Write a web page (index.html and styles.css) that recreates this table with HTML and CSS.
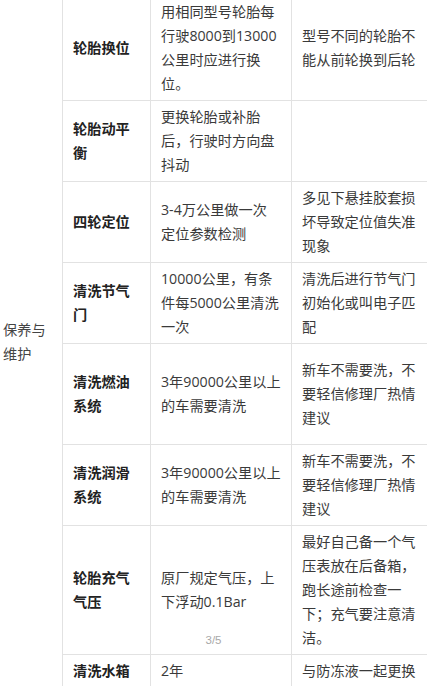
FILE: index.html
```html
<!DOCTYPE html>
<html lang="zh-CN">
<head>
<meta charset="utf-8">
<title>保养与维护</title>
<link rel="stylesheet" href="styles.css">
</head>
<body>
<div class="viewer">
  <table class="spec">
    <colgroup>
      <col class="c1"><col class="c2"><col class="c3"><col class="c4">
    </colgroup>
    <tbody>
      <tr>
        <td class="cat" rowspan="8">保养与维护</td>
        <td class="item">轮胎换位</td>
        <td>用相同型号轮胎每行驶8000到13000公里时应进行换位。</td>
        <td>型号不同的轮胎不能从前轮换到后轮</td>
      </tr>
      <tr>
        <td class="item">轮胎动平衡</td>
        <td>更换轮胎或补胎后，行驶时方向盘抖动</td>
        <td></td>
      </tr>
      <tr>
        <td class="item">四轮定位</td>
        <td>3-4万公里做一次定位参数检测</td>
        <td>多见下悬挂胶套损坏导致定位值失准现象</td>
      </tr>
      <tr>
        <td class="item">清洗节气门</td>
        <td>10000公里，有条件每5000公里清洗一次</td>
        <td>清洗后进行节气门初始化或叫电子匹配</td>
      </tr>
      <tr class="tall">
        <td class="item">清洗燃油系统</td>
        <td>3年90000公里以上的车需要清洗</td>
        <td>新车不需要洗，不要轻信修理厂热情建议</td>
      </tr>
      <tr>
        <td class="item">清洗润滑系统</td>
        <td>3年90000公里以上的车需要清洗</td>
        <td>新车不需要洗，不要轻信修理厂热情建议</td>
      </tr>
      <tr>
        <td class="item">轮胎充气气压</td>
        <td>原厂规定气压，上下浮动0.1Bar</td>
        <td>最好自己备一个气压表放在后备箱，跑长途前检查一下；充气要注意清洁。</td>
      </tr>
      <tr>
        <td class="item">清洗水箱</td>
        <td>2年</td>
        <td>与防冻液一起更换</td>
      </tr>
    </tbody>
  </table>
  <div class="pager">3/5</div>
</div>
</body>
</html>
```

FILE: styles.css
```css
html, body {
  margin: 0;
  padding: 0;
  background: #ffffff;
  overflow: hidden;
}

.viewer {
  position: relative;
  width: 427px;
  height: 686px;
  overflow: hidden;
}

.spec {
  border-collapse: collapse;
  table-layout: fixed;
  width: 439px;
  margin-left: -8px;
  margin-top: -5px;
  font-family: "Open Sans", "Noto Sans CJK SC", sans-serif;
  font-size: 14.2px;
  line-height: 24px;
  color: #3a3a3a;
}

.c1 { width: 70px; }
.c2 { width: 88px; }
.c3 { width: 141px; }
.c4 { width: 140px; }

.spec td {
  border: 1px solid #e2e2e2;
  padding: 4px 10px;
  vertical-align: middle;
  word-break: break-all;
}

.spec td.cat {
  border-top-color: transparent;
  border-bottom-color: transparent;
  border-left-color: transparent;
  color: #444;
}

.spec td.item {
  font-weight: 700;
  color: #222;
}

.spec tr.tall {
  height: 101px;
}

.pager {
  position: absolute;
  left: 0;
  right: 0;
  top: 632px;
  text-align: center;
  font-family: "Liberation Sans", Arial, sans-serif;
  font-size: 11.5px;
  line-height: 16px;
  color: #a8a8a8;
}
```
